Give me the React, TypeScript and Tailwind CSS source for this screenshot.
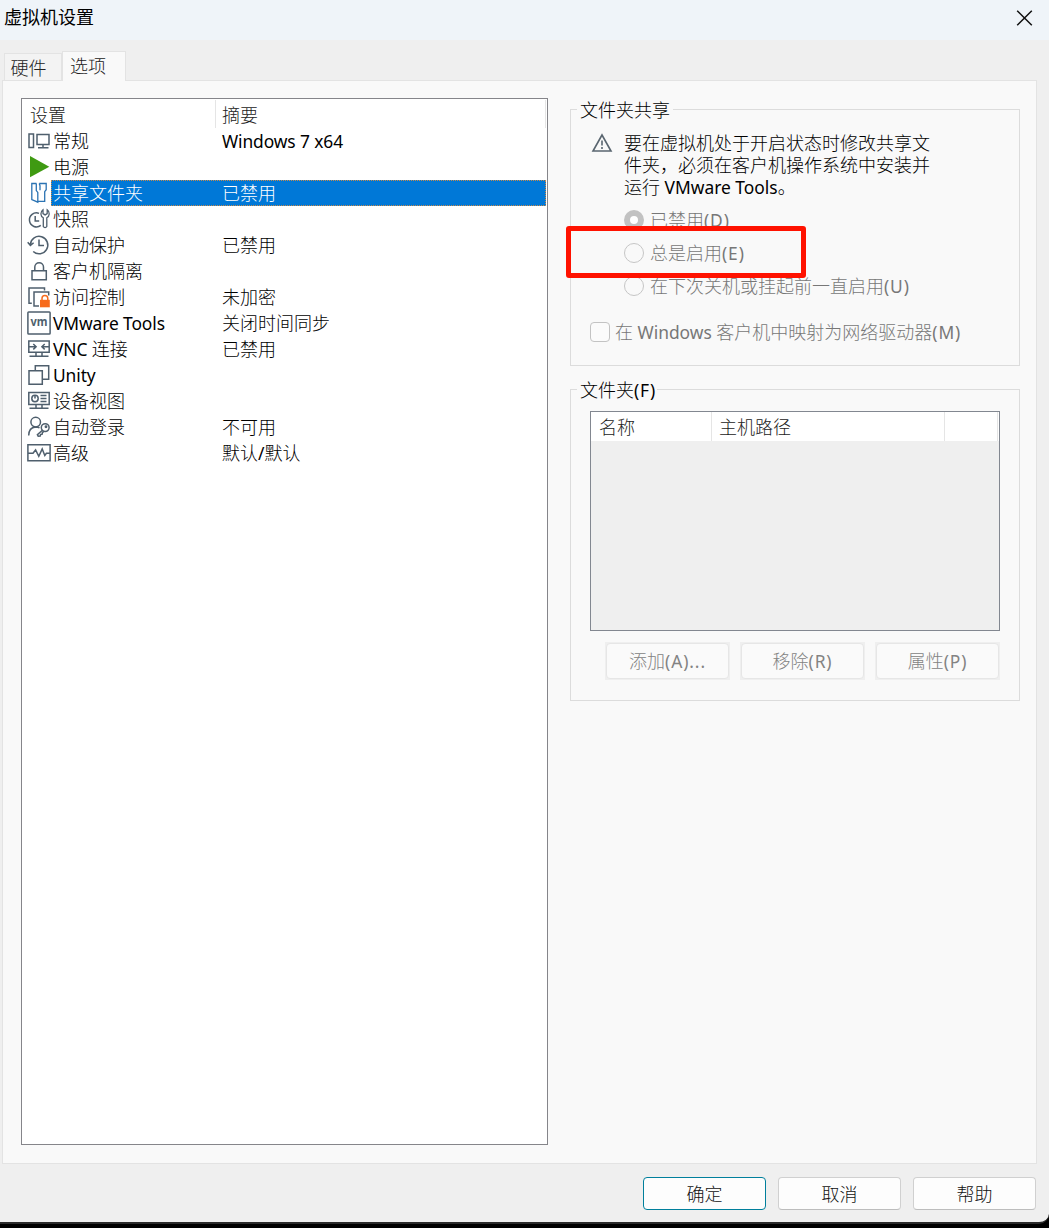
import { useState } from "react"
import type { ReactNode } from "react"
import { clsx } from "clsx"

interface Setting {
  id: string
  name: string
  summary?: string
  icon: ReactNode
}

// Chinese runs use the thin weight, Latin runs the regular one
function T({ children }: { children: string }) {
  const runs = children.split(/([\x20-\x7e]+)/).filter(Boolean)
  return (
    <>
      {runs.map((run, i) => (
        <span
          key={i}
          className={clsx(
            /[\x20-\x7e]/.test(run)
              ? "font-['Noto_Sans',sans-serif] font-normal text-[17.4px]"
              : "font-['Noto_Sans_CJK_SC',sans-serif] font-light text-[18px]",
            run.startsWith("(") && "tracking-[0.9px]",
            /^[A-Z]/.test(run) && "tracking-[-0.1px]"
          )}
        >
          {run}
        </span>
      ))}
    </>
  )
}

function Icon({ children, className }: { children: ReactNode; className?: string }) {
  return (
    <svg
      viewBox="0 0 24 24"
      fill="none"
      stroke="currentColor"
      strokeWidth="1.5"
      className={clsx("h-6 w-6 shrink-0", className || "text-[#4f5f6d]")}
    >
      {children}
    </svg>
  )
}

const settings: Setting[] = [
  {
    id: "general",
    name: "常规",
    summary: "Windows 7 x64",
    icon: (
      <Icon>
        <path d="M2 5h4.5v13.5H2zM10 5.5h12v10H10zM16 15.5v3M11 18.7h10.5" />
      </Icon>
    ),
  },
  {
    id: "power",
    name: "电源",
    icon: (
      <Icon>
        <path d="M3 1l19.3 10.7L3 22.3z" fill="#3f9a12" stroke="none" />
      </Icon>
    ),
  },
  {
    id: "shared",
    name: "共享文件夹",
    summary: "已禁用",
    icon: (
      <Icon className="text-[#2b73b3]">
        <path
          d="M9.5 2.5H4.8v16l6 2.7v-9.8L9.3 9.6V2.5zM12.2 2.5h7v6.2l-1.5 2v9.6h-6.9M12.2 2.5l.8 2.2v4.6"
          strokeWidth="1.3"
        />
      </Icon>
    ),
  },
  {
    id: "snapshot",
    name: "快照",
    icon: (
      <Icon>
        <path d="M12 6.4A7 7 0 1 0 13.8 18.4M8.2 9v5h4" />
        <path
          d="M16.3 19.5v-8.7c-3-1.6-3.3-5.8-.3-8v3.8l2.1 1.3 2.1-1.3V2.8c2.9 2 2.6 6.4-.4 8v8.7c-.8 1.5-2.7 1.5-3.5 0z"
          strokeWidth="1.3"
        />
      </Icon>
    ),
  },
  {
    id: "autoprotect",
    name: "自动保护",
    summary: "已禁用",
    icon: (
      <Icon>
        <path d="M3.4 11.5a8.7 8.7 0 1 1 2.8 7M.7 9.3l2.7 3.2 3.2-2.8M12 6.5v6h5" />
      </Icon>
    ),
  },
  {
    id: "isolation",
    name: "客户机隔离",
    icon: (
      <Icon>
        <path d="M5 11.8h14.3v8.9H5zM7.8 11.8V8a4.3 4.3 0 0 1 8.7 0v3.8" />
      </Icon>
    ),
  },
  {
    id: "access",
    name: "访问控制",
    summary: "未加密",
    icon: (
      <Icon>
        <path d="M4.8 18.2H2V3h15.5v2.5M12 21H7V7h14.7v3.5" />
        <path d="M13 14.8h9.8v7.5H13z" fill="#f76b1c" stroke="none" />
        <path d="M15 15v-1.6a2.9 2.9 0 0 1 5.8 0V15" stroke="#f76b1c" />
      </Icon>
    ),
  },
  {
    id: "tools",
    name: "VMware Tools",
    summary: "关闭时间同步",
    icon: (
      <Icon>
        <rect x=".9" y=".9" width="22.2" height="22.2" rx=".8" />
        <text
          x="12"
          y="15.3"
          textAnchor="middle"
          textLength="17"
          lengthAdjust="spacingAndGlyphs"
          fill="currentColor"
          stroke="none"
          className="font-['Noto_Sans',sans-serif] text-[12px] font-bold"
        >
          vm
        </text>
      </Icon>
    ),
  },
  {
    id: "vnc",
    name: "VNC 连接",
    summary: "已禁用",
    icon: (
      <Icon>
        <path d="M1.8 4h20.4v11.3H1.8zM2 9.7h7M22 9.7h-7M6.3 7l2.8 2.7-2.8 2.7M17.7 7l-2.8 2.7 2.8 2.7M9 15.5V19M15 15.5V19M2.5 19.3h19" />
      </Icon>
    ),
  },
  {
    id: "unity",
    name: "Unity",
    icon: (
      <Icon>
        <path d="M2 7.7h13.3v13.6H2zM8.3 7.5V2.8h13.4v13.4h-6" />
      </Icon>
    ),
  },
  {
    id: "devices",
    name: "设备视图",
    icon: (
      <Icon>
        <path d="M1.8 3.5h20.4v12H1.8zM13.5 6.5h6M13.5 9.5h6M13.5 12.5h6M9 15.5V19M15 15.5V19M2.5 19.3h19M8 6v3.5" />
        <circle cx="8" cy="9.5" r="3.2" />
      </Icon>
    ),
  },
  {
    id: "autologin",
    name: "自动登录",
    summary: "不可用",
    icon: (
      <Icon>
        <circle cx="8.7" cy="7.1" r="4.8" />
        <path d="M1.7 20.5c0-4.8 2.5-8.3 7-8.6 1.5 0 2.7.3 3.8 1M15.7 15l-5.3 4.7.8 1.5 2-.2.4-1.5 1.6-.3.2-1.5 1.5-1.5" />
        <circle cx="18.2" cy="12.6" r="3.9" />
        <circle cx="19" cy="11.8" r=".7" />
      </Icon>
    ),
  },
  {
    id: "advanced",
    name: "高级",
    summary: "默认/默认",
    icon: (
      <Icon>
        <path d="M.9 3.8h22.2v15.9H.9zM1 12.3h5l2.6-3.3 3.2 6.3L15.2 8l2.6 6.5 1.6-2.2H23" />
      </Icon>
    ),
  },
]

const notice = ["要在虚拟机处于开启状态时修改共享文", "件夹，必须在客户机操作系统中安装并", "运行 VMware Tools。"]

const modes = ["已禁用(D)", "总是启用(E)", "在下次关机或挂起前一直启用(U)"]

function FolderButton({ label }: { label: string }) {
  return (
    <button disabled className="h-[38px] w-[125px] border border-[#efefef] bg-[#efefef]">
      <span className="flex h-9 items-center justify-center rounded border border-[#e6e6e6] bg-[#fafafa] leading-6 text-[#838383]">
        <span>
          <T>{label}</T>
        </span>
      </span>
    </button>
  )
}

function FooterButton({ label, primary }: { label: string; primary?: boolean }) {
  return (
    <button
      className={clsx(
        "h-[33px] w-[123px] rounded border bg-[#fdfdfd] leading-6 text-[#111]",
        primary ? "border-[#007f9c]" : "border-[#d0d0d0] border-b-[#bdbdbd]"
      )}
    >
      <T>{label}</T>
    </button>
  )
}

export default function App() {
  const [selected, setSelected] = useState("shared")

  return (
    <div className="h-[1228px] w-[1049px] overflow-hidden bg-black">
      <div className="flex h-[1224px] flex-col overflow-hidden rounded-br-[10px] border-b-2 border-[#2b2b2b] bg-[#efefef] text-black">
        {/* Title bar */}
        <header className="flex h-10 shrink-0 items-start justify-between bg-[#eff4f9] pl-1 pr-4 pt-1">
          <h1 className="font-['Noto_Sans_CJK_SC',sans-serif] text-[18px] leading-6">虚拟机设置</h1>
          <button className="mt-1.5">
            <svg width="17" height="16" viewBox="0 0 17 16" stroke="#111" strokeWidth="1.5">
              <path d="M1.2.8l14.6 14.4M15.8.8L1.2 15.2" />
            </svg>
          </button>
        </header>

        {/* Tabs */}
        <nav className="flex h-10 shrink-0 items-end pl-1">
          <button className="h-[27px] w-[58px] border border-b-0 border-[#e3e3e3] bg-[#f3f3f3] pb-px pr-[9px] leading-[26px] text-[#222]">
            <T>硬件</T>
          </button>
          <button className="relative -mb-px h-[30px] w-16 border border-b-0 border-[#e3e3e3] bg-[#f9f9f9] pb-[3px] pr-3 leading-[26px] text-[#222]">
            <T>选项</T>
          </button>
        </nav>

        <main className="ml-0.5 flex h-[1084px] w-[1035px] shrink-0 items-start border border-[#e3e3e3] bg-[#f9f9f9] pl-[18px]">
          {/* Settings list */}
          <section className="mt-[17px] h-[1047px] w-[527px] border border-[#85858a] bg-white">
            <div className="flex h-[29px] pr-px pt-px leading-[28px] text-[#222]">
              <div className="w-[194px] border-r border-[#e5e5e5] pl-2">
                <T>设置</T>
              </div>
              <div className="flex-1 border-r border-[#e5e5e5] pl-[6px]">
                <T>摘要</T>
              </div>
            </div>
            <ul>
              {settings.map((s) => (
                <li
                  key={s.id}
                  onClick={() => setSelected(s.id)}
                  className="flex h-[26px] items-center pl-[5px] pr-px leading-6"
                >
                  {s.icon}
                  <div
                    className={clsx(
                      "flex h-[26px] flex-1 items-center whitespace-nowrap border border-dotted",
                      s.id === selected
                        ? "border-[#c98a4a] bg-[#0078d7] text-white"
                        : "border-transparent"
                    )}
                  >
                    <span className="w-[170px] pl-px">
                      <T>{s.name}</T>
                    </span>
                    <span>{s.summary && <T>{s.summary}</T>}</span>
                  </div>
                </li>
              ))}
            </ul>
          </section>

          <div className="ml-[22px] mt-4 w-[450px]">
            {/* Folder sharing */}
            <fieldset className="relative h-[269px] border border-[#dcdcdc]">
              <legend className="ml-[6px] h-6 px-[3px] leading-6">
                <T>文件夹共享</T>
              </legend>
              <div className="flex pl-5 pt-[10px]">
                <svg width="22" height="20" viewBox="0 0 22 20" fill="none" stroke="#5a6670" strokeWidth="1.6" className="mt-0.5">
                  <path d="M11 2l9 16H2zM11 7.5v5M11 14v2" />
                </svg>
                <div className="ml-[11px] whitespace-nowrap leading-[22px]">
                  {notice.map((line) => (
                    <p key={line} className="h-[22px]">
                      <T>{line}</T>
                    </p>
                  ))}
                </div>
              </div>
              <div className="mt-[6px] flex flex-col pl-[53px] text-[#777]">
                {modes.map((m, i) => (
                  <label key={m} className="flex h-[33.4px] items-center leading-6">
                    <span
                      className={clsx(
                        "h-5 w-5 rounded-full",
                        i === 0 ? "border-[6px] border-[#c2c2c2] bg-white" : "border border-[#c6c6c6]"
                      )}
                    />
                    <span className="ml-[6px]">
                      <T>{m}</T>
                    </span>
                  </label>
                ))}
              </div>
              <label className="mt-4 flex items-center pl-[19px] leading-6 text-[#777]">
                <span className="h-5 w-5 rounded-sm border border-[#c3c3c3] bg-[#fbfbfb]" />
                <span className="ml-[5px]">
                  <T>在 Windows 客户机中映射为网络驱动器(M)</T>
                </span>
              </label>
              {/* Highlight around the "always enabled" option */}
              <div className="absolute -left-[5px] top-[105px] h-[52px] w-[240px] rounded-[3px] border-[5px] border-[#ff1200]" />
            </fieldset>

            {/* Folders */}
            <fieldset className="mt-[11px] h-[324px] border border-[#dcdcdc]">
              <legend className="ml-[6px] h-6 pl-[3px] pr-px leading-6">
                <T>文件夹(F)</T>
              </legend>
              <div className="ml-[19px] mt-[10px] h-[220px] w-[410px] border border-[#828790] bg-[#efefef]">
                <div className="flex h-[29px] bg-white leading-[29px] text-[#222]">
                  <div className="w-[121px] border-r border-[#e5e5e5] pl-2">
                    <T>名称</T>
                  </div>
                  <div className="w-[233px] border-r border-[#e5e5e5] pl-[7px]">
                    <T>主机路径</T>
                  </div>
                  <div className="w-[53px] border-r border-[#e5e5e5]" />
                </div>
              </div>
              <div className="ml-[34px] mt-[11px] flex gap-[10px]">
                <FolderButton label="添加(A)..." />
                <FolderButton label="移除(R)" />
                <FolderButton label="属性(P)" />
              </div>
            </fieldset>
          </div>
        </main>

        <footer className="flex justify-end gap-3 pr-[13px] pt-[13px]">
          <FooterButton label="确定" primary />
          <FooterButton label="取消" />
          <FooterButton label="帮助" />
        </footer>
      </div>
    </div>
  )
}
